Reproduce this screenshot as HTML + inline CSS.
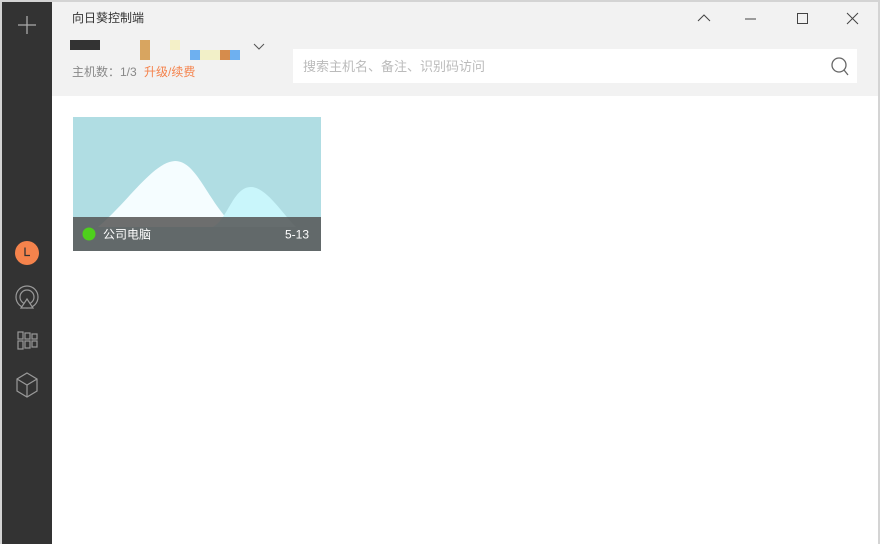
<!DOCTYPE html>
<html><head><meta charset="utf-8"><style>
*{margin:0;padding:0;box-sizing:border-box}
body{width:880px;height:544px;background:#d4d4d4;position:relative;overflow:hidden;font-family:"Liberation Sans","Noto Sans CJK SC",sans-serif}
.side{position:absolute;left:2px;top:2px;width:50px;height:542px;background:#333}
.main{position:absolute;left:52px;top:2px;width:826px;height:542px;background:#fff}
.head{position:absolute;left:0;top:0;width:826px;height:94px;background:#f2f2f2}
.t{position:absolute;font-size:12px;color:#333;line-height:14px}
.ab{position:absolute}
</style></head><body>
<div class="side">
<svg class="ab" style="left:14px;top:12px" width="22" height="22"><path d="M11 2v18M2 11h18" stroke="#aaa" stroke-width="1.3"/></svg>
<div class="ab" style="left:13px;top:239px;width:24px;height:24px;border-radius:50%;background:#f5834c"></div>
<svg class="ab" style="left:13px;top:239px" width="24" height="24"><path d="M10 6.5v8h5" stroke="#333" stroke-width="1.3" fill="none"/></svg>
<svg class="ab" style="left:13px;top:283px" width="26" height="26" fill="none" stroke="#999" stroke-width="1.2"><circle cx="12" cy="12" r="11"/><circle cx="12" cy="12" r="7"/><path d="M12 14l-6 9h12z" fill="#333"/></svg>
<svg class="ab" style="left:15px;top:329px" width="24" height="20" fill="none" stroke="#999" stroke-width="1.2"><rect x="1" y="1" width="5" height="7"/><rect x="8" y="2" width="5" height="6"/><rect x="15" y="3" width="5" height="5"/><rect x="1" y="10" width="5" height="8"/><rect x="8" y="10" width="5" height="7"/><rect x="15" y="10" width="5" height="6"/></svg>
<svg class="ab" style="left:13px;top:370px" width="24" height="26" fill="none" stroke="#999" stroke-width="1.2"><path d="M12 1l10 6v12l-10 6-10-6V7zM2 7l10 6 10-6M12 13v12"/></svg>
</div>
<div class="main">
<div class="head">
<div class="t" style="left:20px;top:9px">向日葵控制端</div>
<div class="ab" style="left:18px;top:38px;width:30px;height:10px;background:#333"></div>
<div class="ab" style="left:88px;top:38px;width:10px;height:20px;background:#d8a560"></div>
<div class="ab" style="left:118px;top:38px;width:10px;height:10px;background:#f4f0c8"></div>
<div class="ab" style="left:138px;top:48px;width:50px;height:10px;background:linear-gradient(90deg,#6eb0f0 20%,#f2f0c8 20%,#f2f0c8 60%,#d68c4c 60%,#d68c4c 80%,#6eb0f0 80%)"></div>
<svg class="ab" style="left:200px;top:40px" width="14" height="10"><path d="M2 2l5 5 5-5" stroke="#555" fill="none"/></svg>
<div class="t" style="left:20px;top:63px;color:#888">主机数：1/3 <span style="color:#f5834c;margin-left:4px">升级/续费</span></div>
<div class="ab" style="left:241px;top:47px;width:564px;height:34px;background:#fff"></div>
<div class="t" style="left:251px;top:58px;color:#bbb;font-size:13px">搜索主机名、备注、识别码访问</div>
<svg class="ab" style="left:778px;top:54px" width="20" height="22" fill="none" stroke="#666" stroke-width="1.3"><circle cx="9" cy="9" r="7"/><path d="M14 14l4 5"/></svg>
<svg class="ab" style="left:644px;top:10px" width="16" height="12" fill="none" stroke="#444"><path d="M2 9l6-6 6 6"/></svg>
<svg class="ab" style="left:692px;top:10px" width="14" height="12" stroke="#444"><path d="M1 7h11"/></svg>
<svg class="ab" style="left:744px;top:10px" width="14" height="14" fill="none" stroke="#444"><rect x="1.5" y="1.5" width="10" height="10"/></svg>
<svg class="ab" style="left:794px;top:10px" width="14" height="14" stroke="#444"><path d="M1 1l11 11M12 1L1 12"/></svg>
</div>
<svg class="ab" style="left:21px;top:115px" width="248" height="134">
<rect width="248" height="134" fill="#b0dde3"/>
<path d="M25 110C55 85 80 45 102 44c22 0 32 40 60 66z" fill="#f5fdff"/>
<path d="M140 110c15-8 20-40 38-40c15 0 30 25 45 40z" fill="#c9f6fb"/>
<rect y="100" width="248" height="34" fill="#555" opacity=".85"/>
<circle cx="16" cy="117" r="6.5" fill="#4ed01c"/>
<text x="30" y="121.5" font-size="12" fill="#fff" font-family="Liberation Sans,Noto Sans CJK SC,sans-serif">公司电脑</text>
<text x="236" y="121.5" font-size="12" fill="#fff" text-anchor="end" font-family="Liberation Sans,sans-serif">5-13</text>
</svg>
</div>
</body></html>
